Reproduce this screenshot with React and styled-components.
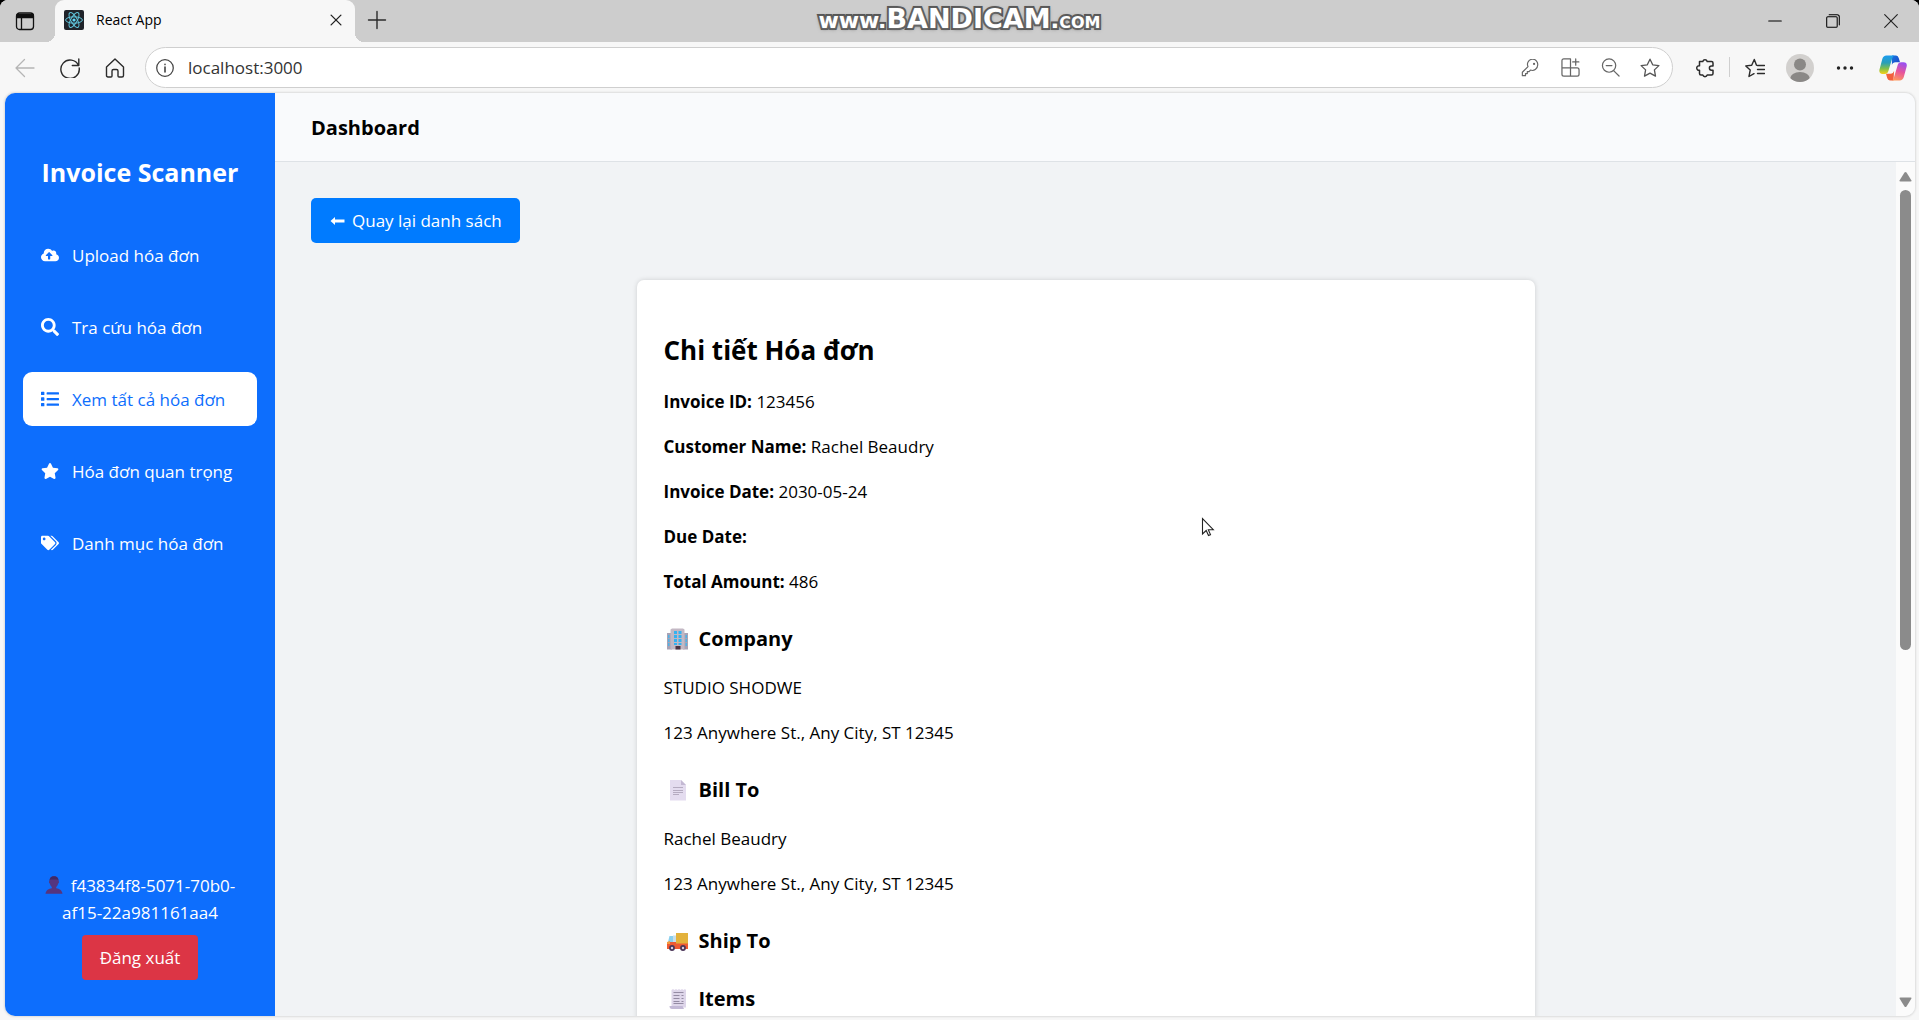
import React from "react";
import styled, { createGlobalStyle } from "styled-components";
import { FaCloudUploadAlt, FaSearch, FaList, FaStar, FaTags } from "react-icons/fa";

const GlobalStyle = createGlobalStyle`
  *, *::before, *::after { box-sizing: border-box; }
  body {
    margin: 0;
    background: #000;
    color: #000;
    font: 17px/27px "Open Sans", "Noto Sans", sans-serif;
  }
  button, input { font: inherit; }
  svg { display: block; flex: none; }
`;

/* ---------- browser window ---------- */

const Window = styled.div`
  position: relative;
  display: flex;
  flex-direction: column;
  height: 100vh;
  overflow: hidden;
  border-radius: 8px 8px 0 0;
  background: #f7f7f7;
`;

const TabStrip = styled.div`
  display: flex;
  height: 42px;
  background: #cdcdcd;
`;

const ChromeButton = styled.button`
  display: flex;
  align-items: center;
  justify-content: center;
  flex: none;
  width: ${(p) => p.$width || 45}px;
  padding: 0;
  border: 0;
  background: none;
  color: ${(p) => p.$color || "#2b2b2b"};
`;

const Tab = styled.div`
  position: relative;
  display: flex;
  align-items: center;
  width: 300px;
  margin-left: 5px;
  padding: 0 2px 2px 9px;
  gap: 12px;
  border-radius: 9px 9px 0 0;
  background: #f7f7f7;
  font-size: 14px;
  line-height: 20px;
  &::before,
  &::after {
    content: "";
    position: absolute;
    bottom: 0;
    width: 9px;
    height: 9px;
  }
  &::before {
    left: -9px;
    background: radial-gradient(circle at 0 0, transparent 9px, #f7f7f7 9px);
  }
  &::after {
    right: -9px;
    background: radial-gradient(circle at 100% 0, transparent 9px, #f7f7f7 9px);
  }
`;

const TabTitle = styled.span`
  flex: 1;
`;

const TabTools = styled.div`
  display: flex;
  padding-bottom: 3px;
`;

const WindowControls = styled.div`
  display: flex;
  margin-left: auto;
`;

const Watermark = styled.div`
  position: absolute;
  top: 4px;
  left: 0;
  right: 0;
  text-align: center;
  font: bold 22px/30px "DejaVu Sans", sans-serif;
  color: #fff;
  pointer-events: none;
  -webkit-text-stroke: 4px #555;
  paint-order: stroke fill;
  text-shadow: 0 0 3px #666, 0 1px 4px #777;
  big { font-size: 27px; }
  small { font-size: 23px; font-variant: small-caps; }
`;

const Toolbar = styled.div`
  display: flex;
  height: 50px;
  padding: 5px 0 4px 2px;
`;

const AddressBar = styled.form`
  display: flex;
  align-items: center;
  flex: 1;
  height: 41px;
  margin: 0 9px 0 8px;
  padding: 0 2px 0 10px;
  border: 1px solid #cfcfcf;
  border-radius: 21px;
  background: #fff;
  color: #444;
`;

const AddressInput = styled.input`
  flex: 1;
  min-width: 0;
  margin-left: 14px;
  padding: 0;
  border: 0;
  outline: 0;
  background: none;
  color: #333;
`;

const Divider = styled.span`
  width: 1px;
  height: 20px;
  margin: 10px 2px;
  background: #cfcfcf;
`;

/* ---------- page ---------- */

const Page = styled.div`
  display: flex;
  flex: 1;
  min-height: 0;
  margin: 1px 4px 4px 5px;
  overflow: hidden;
  border-radius: 10px;
  background: #f1f3f5;
  box-shadow: 0 0 2px 1px #dcdcdc;
`;

const Sidebar = styled.aside`
  display: flex;
  flex-direction: column;
  flex: none;
  width: 270px;
  padding: 61px 18px 36px;
  background: #0d6efd;
  color: #fff;
`;

const Brand = styled.h2`
  margin: 0 0 38px;
  font-size: 25px;
  line-height: 36px;
  text-align: center;
`;

const Nav = styled.nav`
  display: flex;
  flex-direction: column;
  gap: 18px;
`;

const NavLink = styled.a`
  display: flex;
  align-items: center;
  gap: 13px;
  height: 54px;
  padding: 0 18px;
  border-radius: 9px;
  background: ${(p) => (p.$active ? "#fff" : "transparent")};
  color: ${(p) => (p.$active ? "#0d6efd" : "#fff")};
  text-decoration: none;
  white-space: nowrap;
`;

const Account = styled.div`
  margin-top: auto;
  padding: 0 18px;
  text-align: center;
`;

const UserId = styled.p`
  margin: 0 0 9px;
  svg { display: inline-block; vertical-align: -2px; margin-right: 8px; }
`;

const Button = styled.button`
  display: inline-flex;
  align-items: center;
  gap: 7px;
  height: 45px;
  padding: 0 18px;
  border: 0;
  border-radius: ${(p) => (p.$danger ? 4 : 5)}px;
  background: ${(p) => (p.$danger ? "#dc3545" : "#007bff")};
  color: #fff;
`;

const Main = styled.main`
  display: flex;
  flex-direction: column;
  flex: 1;
  min-width: 0;
`;

const Header = styled.header`
  flex: none;
  padding: 21px 36px 20px;
  border-bottom: 1px solid #dee2e6;
  background: #f9fafc;
`;

const Heading = styled.h1`
  margin: 0;
  font-size: 20px;
  line-height: 27px;
`;

const Body = styled.div`
  display: flex;
  flex: 1;
  min-height: 0;
`;

const Content = styled.div`
  flex: 1;
  min-width: 0;
  padding: 36px;
  overflow: hidden;
`;

const Card = styled.article`
  max-width: 898px;
  margin: 37px auto 0;
  padding: 27px;
  border-radius: 7px;
  background: #fff;
  box-shadow: 0 0 5px rgba(0, 0, 0, 0.15);
  p { margin: 18px 0; }
`;

const CardTitle = styled.h2`
  margin: 25px 0 20px;
  font-size: 26px;
  line-height: 36px;
`;

const SectionTitle = styled.h3`
  display: flex;
  align-items: center;
  gap: 7px;
  margin: 30px 0 21px;
  font-size: 20px;
  line-height: 28px;
`;

const ScrollTrack = styled.div`
  display: flex;
  flex-direction: column;
  align-items: center;
  flex: none;
  width: 19px;
  padding: 9px 0 8px;
  background: #fbfbfb;
`;

const ScrollThumb = styled.div`
  width: 11px;
  height: 55%;
  margin: 8px 0 auto;
  border-radius: 6px;
  background: #8b8b8b;
`;

const Pointer = styled.svg`
  position: absolute;
  left: 1201px;
  top: 517px;
`;

/* ---------- drawings ---------- */

const Line = ({ size = 20, w = 1.3, children }) => (
  <svg width={size} height={size} viewBox="0 0 20 20" fill="none" stroke="currentColor"
    strokeWidth={w} strokeLinecap="round" strokeLinejoin="round">{children}</svg>
);

const Workspaces = () => (
  <Line>
    <rect x="1.5" y="2" width="17" height="16.5" rx="3" />
    <path d="M2 3.5h16v3H2z" fill="currentColor" />
    <path d="M6.5 6v12" />
  </Line>
);

const Favicon = () => (
  <svg width="20" height="20" viewBox="0 0 20 20">
    <rect width="20" height="20" rx="2" fill="#20232a" />
    <g fill="none" stroke="#61c5dc" strokeWidth="1">
      <ellipse cx="10" cy="10" rx="8.4" ry="3.2" />
      <ellipse cx="10" cy="10" rx="8.4" ry="3.2" transform="rotate(60 10 10)" />
      <ellipse cx="10" cy="10" rx="8.4" ry="3.2" transform="rotate(120 10 10)" />
    </g>
    <circle cx="10" cy="10" r="1.6" fill="#61dafb" />
  </svg>
);

const Copilot = () => (
  <svg width="28" height="28" viewBox="0 0 28 28">
    <defs>
      <linearGradient id="cpA" x1="0" y1="0" x2="0" y2="1">
        <stop offset="0" stopColor="#1b9cf0" /><stop offset=".4" stopColor="#2a9fb8" />
        <stop offset=".7" stopColor="#7fbf4d" /><stop offset="1" stopColor="#f7d117" />
      </linearGradient>
      <linearGradient id="cpB" x1=".6" y1="0" x2=".3" y2="1">
        <stop offset="0" stopColor="#9a4ff0" /><stop offset=".5" stopColor="#e8559a" />
        <stop offset="1" stopColor="#ff9a5c" />
      </linearGradient>
      <linearGradient id="cpC" x1="0" y1="0" x2="1" y2="1">
        <stop offset="0" stopColor="#1677e0" /><stop offset="1" stopColor="#1d3fc4" />
      </linearGradient>
    </defs>
    <path d="M13 1.5h3.600c2 0 2.700 1.200 3.200 2.800l1.200 4h-4.500c-2 0-3 .8-3.600 2.800z" fill="url(#cpC)" />
    <path d="M14.500 26.500h-3c-2 0-2.900-1.200-3.400-2.800L7 19.800h4.500c2 0 3-1 3.600-3z" fill="#f2603c" />
    <path d="M7.500 1.500h8c-1.600.6-2 1.900-2.500 3.600l-3.600 12c-.6 1.900-1.600 2.900-3.600 2.900H3.500c-2.600 0-3.700-2-3-4.600L3.300 5c.7-2.300 2-3.500 4.200-3.500z" fill="url(#cpA)" />
    <path d="M20.600 26.500h-8c1.600-.6 2-1.900 2.500-3.600l3.600-12c.6-1.900 1.600-2.700 3.600-2.700h2.300c2.600 0 3.700 2 3 4.600L24.800 23c-.7 2.300-2 3.500-4.200 3.500z" fill="url(#cpB)" />
  </svg>
);

const Avatar = () => (
  <svg width="28" height="28" viewBox="0 0 28 28">
    <clipPath id="avatarClip"><circle cx="14" cy="14" r="14" /></clipPath>
    <g clipPath="url(#avatarClip)">
      <rect width="28" height="28" fill="#d2d0ce" />
      <circle cx="14" cy="10.500" r="6" fill="#8a8886" />
      <ellipse cx="14" cy="25" rx="10" ry="7" fill="#8a8886" />
    </g>
  </svg>
);

const Bust = () => (
  <svg width="18" height="18" viewBox="0 0 18 18">
    <path d="M4.500 5C4.500 2 6 .2 9 .2S13.500 2 13.500 5c.8 0 .7 2.300-.3 2.600-.4 1.600-1 2.700-2 3.400v1.200c3 .6 5.800 1.800 6.300 5.600H.500c.5-3.800 3.300-5 6.300-5.600V11c-1-.7-1.600-1.800-2-3.400-1-.3-1.100-2.600-.3-2.600z" fill="#55357f" />
    <path d="M4.500 5C4.500 2 6 .2 9 .2S13.500 2 13.500 5l-1-1.500h-7z" fill="#3f2a66" />
  </svg>
);

const ArrowLeft = () => (
  <svg width="16" height="8" viewBox="0 0 16 8" fill="#fff"><path d="M6 0v2.500H15.500v3H6V8L1.500 4z" /></svg>
);

const Building = () => (
  <svg width="28" height="22" viewBox="0 0 28 22">
    <path d="M3 5h5v16.500H3zM19 5h5v16.500h-5z" fill="#a9a3b5" />
    <path d="M6.500 1.500 8 .5h11l1.500 1v20h-14z" fill="#c3b8c4" />
    <path d="M4 7h1.500v3H4zm0 4h1.500v3H4zm0 4h1.500v3H4zM21.500 7H23v3h-1.500zm0 4H23v3h-1.500zm0 4H23v3h-1.500z" fill="#4fb3e8" />
    <path d="M10 3h3v3h-3zm4.500 0h3v3h-3zM10 7h3v3h-3zm4.500 0h3v3h-3zM10 11h3v3h-3zm4.500 0h3v3h-3zM10 15h3v2h-3zm4.500 0h3v2h-3z" fill="#35b2f0" />
    <path d="M11.500 18h5v3.500h-5z" fill="#4b3443" />
  </svg>
);

const PageIcon = () => (
  <svg width="28" height="22" viewBox="0 0 28 22">
    <path d="M6 1h11l5 5v15.500H6z" fill="#e4dcef" />
    <path d="M17 1v5h5z" fill="#c4b9d3" />
    <path d="M9 8.500h10M9 11.500h10M9 13.500h10M9 15.500h6" stroke="#b5abc0" />
  </svg>
);

const Truck = () => (
  <svg width="28" height="22" viewBox="0 0 28 22">
    <path d="M12 3h12v11H12z" fill="#e3b23c" />
    <path d="M5.500 6H12v8H3.500z" fill="#8ad0ee" />
    <path d="M9 5.500h3V14H9z" fill="#c9dfe8" />
    <path d="M3 12l9 0v1.500h12v5.500H3z" fill="#ee5a33" />
    <path d="M3 12l3-1v3H3z" fill="#f59a3c" />
    <circle cx="8" cy="18" r="2.900" fill="#4a3558" /><circle cx="8" cy="18" r="1.200" fill="#d8cfe0" />
    <circle cx="19" cy="18" r="2.900" fill="#4a3558" /><circle cx="19" cy="18" r="1.200" fill="#d8cfe0" />
  </svg>
);

const Receipt = () => (
  <svg width="28" height="22" viewBox="0 0 28 22">
    <path d="M7.500 2l1.500-1 1.500 1L12 1l1.500 1L15 1l1.500 1L18 1l1.500 1L21 1l1 1v17.500H7.500z" fill="#ded6ea" />
    <path d="M5.500 18h13l1.500 3H8c-1.600 0-2.500-1-2.500-3z" fill="#c3b9d6" />
    <path d="M9.500 4.500h10M9.500 7.500h6M17.500 7.500h2M9.500 10.500h6M17.500 10.500h2M9.500 13.500h6M17.500 13.500h2M9.500 15.500h10" stroke="#948ba3" />
  </svg>
);

const Triangle = ({ down }) => (
  <svg width="13" height="11" viewBox="0 0 13 11" fill="#8b8b8b">
    <path d={down ? "M1.500.5h10q1.500 0 .8 1.200L7.500 9.500q-1 1.200-2 0L.7 1.700Q0 .5 1.500.5z" : "M1.500 10.500h10q1.500 0 .8-1.200L7.500 1.500q-1-1.200-2 0L.7 9.300Q0 10.500 1.500 10.500z"} />
  </svg>
);

const StarShape = "M10 1.200l2.700 5.600 6.200.8-4.500 4.300 1.100 6.200L10 15.100l-5.500 3 1.100-6.200L1.100 7.600l6.200-.8z";

/* ---------- data ---------- */

const NAV = [
  { label: "Upload hóa đơn", Icon: FaCloudUploadAlt },
  { label: "Tra cứu hóa đơn", Icon: FaSearch },
  { label: "Xem tất cả hóa đơn", Icon: FaList, active: true },
  { label: "Hóa đơn quan trọng", Icon: FaStar },
  { label: "Danh mục hóa đơn", Icon: FaTags },
];

const FIELDS = [
  ["Invoice ID:", "123456"],
  ["Customer Name:", "Rachel Beaudry"],
  ["Invoice Date:", "2030-05-24"],
  ["Due Date:", ""],
  ["Total Amount:", "486"],
];

const SECTIONS = [
  { title: "Company", Icon: Building, lines: ["STUDIO SHODWE", "123 Anywhere St., Any City, ST 12345"] },
  { title: "Bill To", Icon: PageIcon, lines: ["Rachel Beaudry", "123 Anywhere St., Any City, ST 12345"] },
  { title: "Ship To", Icon: Truck, lines: [] },
  { title: "Items", Icon: Receipt, lines: [] },
];

function BrowserTabs() {
  return (
    <TabStrip>
      <ChromeButton $width={50} $color="#111" aria-label="Workspaces"><Workspaces /></ChromeButton>
      <Tab>
        <Favicon />
        <TabTitle>React App</TabTitle>
        <ChromeButton $width={34} $color="#222" aria-label="Close tab">
          <Line size={14} w={1.900}><path d="M3 3l14 14M17 3L3 17" /></Line>
        </ChromeButton>
      </Tab>
      <TabTools>
        <ChromeButton $width={44} aria-label="New tab"><Line w={1.400}><path d="M10 1.500v17M1.500 10h17" /></Line></ChromeButton>
      </TabTools>
      <WindowControls>
        <ChromeButton $width={58} $color="#000" aria-label="Minimize">
          <Line size={14} w={1.500}><path d="M1 10h18" /></Line>
        </ChromeButton>
        <ChromeButton $width={58} $color="#000" aria-label="Restore">
          <Line size={14} w={1.500}><path d="M1 5.500Q1 4 2.500 4h12Q16 4 16 5.500v12q0 1.500-1.500 1.500h-12Q1 19 1 17.500zM4.500 1H16q3 0 3 3v11.500" /></Line>
        </ChromeButton>
        <ChromeButton $width={57} $color="#222" aria-label="Close">
          <Line size={14} w={1.600}><path d="M1 1l18 18M19 1L1 19" /></Line>
        </ChromeButton>
      </WindowControls>
    </TabStrip>
  );
}

function BrowserToolbar() {
  return (
    <Toolbar>
      <ChromeButton $color="#b5b5b5" aria-label="Back"><Line><path d="M19 10H1M9.500 1.500L1 10l8.500 8.500" /></Line></ChromeButton>
      <ChromeButton aria-label="Reload"><Line w={1.400}><path d="M18.500 7.500A9.200 9.200 0 1 0 19.200 10M18.800 1v6.500h-6.500" /></Line></ChromeButton>
      <ChromeButton aria-label="Home"><Line w={1.400}><path d="M1.500 9L10 1l8.500 8v8.500q0 1.500-1.500 1.500h-3q-1 0-1-1v-5q0-1.500-1.500-1.500h-3Q7 11.500 7 13v5q0 1-1 1H3q-1.500 0-1.500-1.500z" /></Line></ChromeButton>
      <AddressBar>
        <Line size={18} w={1.400}><circle cx="10" cy="10" r="9.200" /><path d="M10 9v5.500M10 6v.2" strokeWidth="1.800" /></Line>
        <AddressInput aria-label="Address" defaultValue="localhost:3000" />
        <ChromeButton type="button" $width={40} $color="#666" aria-label="Passwords">
          <Line size={18}><path d="M18.500 7a5.800 5.800 0 0 1-8 5.300L9 14H7v2.200H5V18.500H1.500v-3.800L7.800 8.500A5.700 5.700 0 1 1 18.500 7z" /><circle cx="14.500" cy="5.500" r=".6" /></Line>
        </ChromeButton>
        <ChromeButton type="button" $width={40} $color="#666" aria-label="Apps">
          <Line size={19}><path d="M10 1H3Q1 1 1 3v14q0 2 2 2h14q2 0 2-2v-4.500q0-2-2-2H1M10 1v18M15.500 1v6.500M12.300 4.200h6.500" /></Line>
        </ChromeButton>
        <ChromeButton type="button" $width={40} $color="#666" aria-label="Zoom out">
          <Line size={19}><circle cx="8.500" cy="8" r="7" /><path d="M13.500 13.500L19 19M5.500 8h6" /></Line>
        </ChromeButton>
        <ChromeButton type="button" $width={40} $color="#555" aria-label="Add to favorites">
          <Line><path d={StarShape} /></Line>
        </ChromeButton>
      </AddressBar>
      <ChromeButton aria-label="Extensions">
        <Line w={1.500}><path d="M4.500 3.500h3.300a2.300 2.300 0 0 1 4.400 0h4.300q1.500 0 1.500 1.500v3h-1.500a2 2 0 0 0 0 4.200H18v3.300q0 1.500-1.500 1.500h-4.300a2.300 2.300 0 0 1-4.400 0H6Q4.500 17 4.500 15.500v-3.200a2.300 2.300 0 1 1 0-4.500z" /></Line>
      </ChromeButton>
      <Divider />
      <ChromeButton aria-label="Favorites">
        <Line w={1.400}><path d="M11.500 7.200L9.300 1.500 6.700 7.200.8 7.900l4.400 4.200L4 18.500l5-2.800M12.500 7.500H19.500M12.500 11.500h7M12.500 15.500h7" /></Line>
      </ChromeButton>
      <ChromeButton aria-label="Profile"><Avatar /></ChromeButton>
      <ChromeButton aria-label="Settings and more">
        <svg width="18" height="4" viewBox="0 0 18 4" fill="#222"><circle cx="2.500" cy="2" r="1.700" /><circle cx="9" cy="2" r="1.700" /><circle cx="15.500" cy="2" r="1.700" /></svg>
      </ChromeButton>
      <ChromeButton $width={52} aria-label="Copilot"><Copilot /></ChromeButton>
    </Toolbar>
  );
}

export default function App() {
  return (
    <Window>
      <GlobalStyle />
      <BrowserTabs />
      <BrowserToolbar />
      <Watermark>www.<big>BANDICAM</big><small>.com</small></Watermark>
      <Page>
        <Sidebar>
          <Brand>Invoice Scanner</Brand>
          <Nav>
            {NAV.map(({ label, Icon, active }) => (
              <NavLink key={label} href="#" $active={active} aria-current={active ? "page" : undefined}>
                <Icon size={18} />
                {label}
              </NavLink>
            ))}
          </Nav>
          <Account>
            <UserId><Bust />f43834f8-5071-70b0-af15-22a981161aa4</UserId>
            <Button $danger>Đăng xuất</Button>
          </Account>
        </Sidebar>
        <Main>
          <Header><Heading>Dashboard</Heading></Header>
          <Body>
            <Content>
              <Button><ArrowLeft />Quay lại danh sách</Button>
              <Card>
                <CardTitle>Chi tiết Hóa đơn</CardTitle>
                {FIELDS.map(([name, value]) => (
                  <p key={name}><strong>{name}</strong> {value}</p>
                ))}
                {SECTIONS.map(({ title, Icon, lines }) => (
                  <section key={title}>
                    <SectionTitle><Icon />{title}</SectionTitle>
                    {lines.map((line) => <p key={line}>{line}</p>)}
                  </section>
                ))}
              </Card>
            </Content>
            <ScrollTrack>
              <Triangle />
              <ScrollThumb />
              <Triangle down />
            </ScrollTrack>
          </Body>
        </Main>
      </Page>
      <Pointer width="14" height="20" viewBox="0 0 14 20" fill="#fff" stroke="#222" strokeWidth="1.100">
        <path d="M1.500 1.500v15.500l3.700-3.500 2.300 5 2-.9-2.200-4.900h5z" />
      </Pointer>
    </Window>
  );
}
